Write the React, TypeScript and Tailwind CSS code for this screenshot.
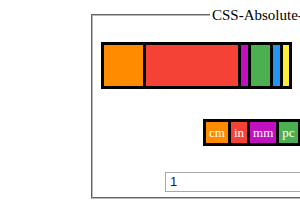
export default function App() {
  const segments = [
    { w: "w-[39px]", c: "bg-[#ff8c00]" },
    { w: "w-[92px]", c: "bg-[#f44336]" },
    { w: "w-[7px]", c: "bg-[#c010c0]" },
    { w: "w-[19px]", c: "bg-[#4caf50]" },
    { w: "w-[7px]", c: "bg-[#2196f3]" },
    { w: "w-[6px]", c: "bg-[#ffeb3b]" },
  ];

  const labels = [
    { t: "cm", c: "bg-[#ff8c00]" },
    { t: "in", c: "bg-[#f44336]" },
    { t: "mm", c: "bg-[#c010c0]" },
    { t: "pc", c: "bg-[#4caf50]" },
  ];

  return (
    <div className="w-[300px] h-[210px] overflow-hidden bg-white font-['Liberation_Serif',serif]">
      <fieldset className="ml-[91px] mt-[7px] w-[300px] border-2 border-[#b8b8b8] [border-style:groove] px-[8px] pb-[4px]">
        <legend className="ml-[109px] px-[2px] text-[15px] leading-[16px] text-black whitespace-nowrap">
          CSS-Absolute-Units
        </legend>

        {/* bar of units */}
        <div className="mt-[19px] flex w-fit h-[47px] gap-[3px] border-[3px] border-black bg-black">
          {segments.map((s, i) => (
            <div key={i} className={`${s.w} ${s.c} h-full`}></div>
          ))}
        </div>

        {/* legend labels */}
        <div className="mt-[30px] ml-[102px] flex w-fit gap-[3px] bg-black p-[3px] pr-[10px]">
          {labels.map((l) => (
            <span key={l.t} className={`${l.c} px-[3px] text-[13px] leading-[21px] text-white`}>
              {l.t}
            </span>
          ))}
        </div>

        {/* input */}
        <div className="mt-[23px] ml-[64px]">
          <input
            defaultValue="1"
            className="w-[200px] h-[20px] border border-[#a9a9a9] px-[4px] text-[13px] text-[#1a1a4a] font-['Liberation_Sans',sans-serif] outline-none"
          />
        </div>
      </fieldset>
    </div>
  );
}
